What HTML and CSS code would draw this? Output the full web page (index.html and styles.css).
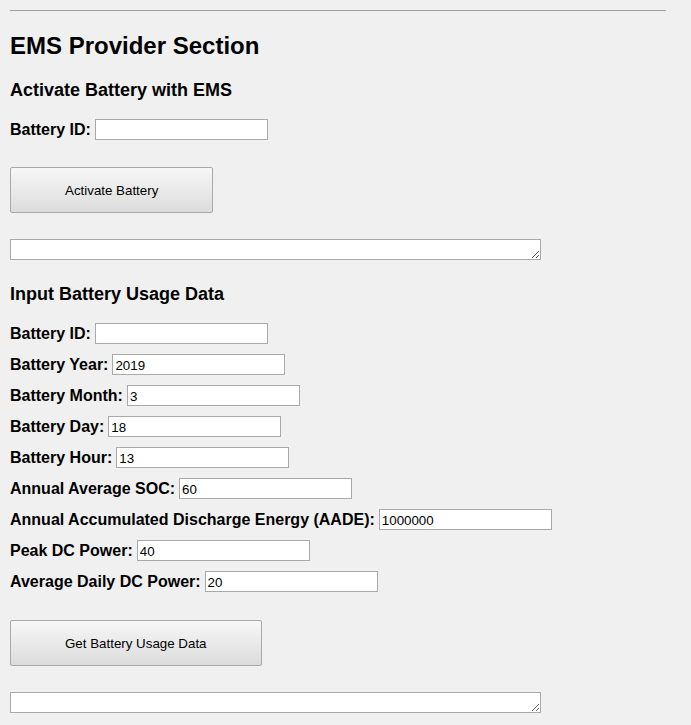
FILE: index.html
```html
<!DOCTYPE html>
<html>
<head>
<meta charset="utf-8">
<link rel="stylesheet" href="styles.css">
</head>
<body>
<div class="page">
  <hr class="rule">
  <h1 class="title">EMS Provider Section</h1>

  <h2 class="subtitle">Activate Battery with EMS</h2>
  <div class="fields">
    <div class="row"><label class="lbl">Battery ID:</label><input class="inp" type="text"></div>
  </div>
  <button class="btn">Activate Battery</button>
  <textarea class="out"></textarea>

  <h2 class="subtitle second">Input Battery Usage Data</h2>
  <div class="fields">
    <div class="row"><label class="lbl">Battery ID:</label><input class="inp" type="text"></div>
    <div class="row"><label class="lbl">Battery Year:</label><input class="inp" type="text" value="2019"></div>
    <div class="row"><label class="lbl">Battery Month:</label><input class="inp" type="text" value="3"></div>
    <div class="row"><label class="lbl">Battery Day:</label><input class="inp" type="text" value="18"></div>
    <div class="row"><label class="lbl">Battery Hour:</label><input class="inp" type="text" value="13"></div>
    <div class="row"><label class="lbl">Annual Average SOC:</label><input class="inp" type="text" value="60"></div>
    <div class="row"><label class="lbl">Annual Accumulated Discharge Energy (AADE):</label><input class="inp" type="text" value="1000000"></div>
    <div class="row"><label class="lbl">Peak DC Power:</label><input class="inp" type="text" value="40"></div>
    <div class="row"><label class="lbl">Average Daily DC Power:</label><input class="inp" type="text" value="20"></div>
  </div>
  <button class="btn btn-last">Get Battery Usage Data</button>
  <textarea class="out"></textarea>
</div>
</body>
</html>
```
FILE: styles.css
```css
html, body {
  margin: 0;
  padding: 0;
  background: #f0f0f0;
}
body {
  font-family: "Liberation Sans", Arial, sans-serif;
  color: #000;
}
.page {
  width: 656px;
  padding: 10px 0 0 10px;
}
.rule {
  margin: 0;
  height: 0;
  border: none;
  border-top: 1px solid #a0a0a0;
}
.title {
  margin: 21px 0 0;
  font-size: 24px;
  line-height: 28px;
  font-weight: bold;
}
.subtitle {
  margin: 19px 0 0;
  font-size: 18px;
  line-height: 22px;
  font-weight: bold;
}
.subtitle.second {
  margin-top: 23px;
}
.fields {
  margin-top: 18px;
  display: flex;
  flex-direction: column;
  gap: 10px;
}
.row {
  display: flex;
  align-items: center;
  height: 21px;
  gap: 4px;
}
.lbl {
  font-size: 16px;
  font-weight: bold;
  line-height: 21px;
  white-space: nowrap;
}
.inp {
  box-sizing: border-box;
  width: 173px;
  height: 21px;
  margin: 0;
  padding: 2px 2px 0;
  border: 1px solid #a9a9a9;
  background: #fff;
  font-family: "Liberation Sans", Arial, sans-serif;
  font-size: 13.333px;
  color: #000;
  outline: none;
}
.btn {
  display: block;
  box-sizing: border-box;
  height: 46px;
  margin: 27px 0 0;
  padding: 0 54px;
  border: 1px solid #a9a9a9;
  border-radius: 2px;
  background: linear-gradient(to bottom, #f7f7f7, #dcdcdc);
  font-family: "Liberation Sans", Arial, sans-serif;
  font-size: 13.333px;
  line-height: 15px;
  color: #000;
}
.btn-last {
  margin-top: 28px;
}
.out {
  display: block;
  box-sizing: border-box;
  width: 531px;
  height: 21px;
  margin: 26px 0 0;
  padding: 1px 2px;
  border: 1px solid #a9a9a9;
  background: #fff;
  font-family: "Liberation Mono", monospace;
  font-size: 13.333px;
}
```
